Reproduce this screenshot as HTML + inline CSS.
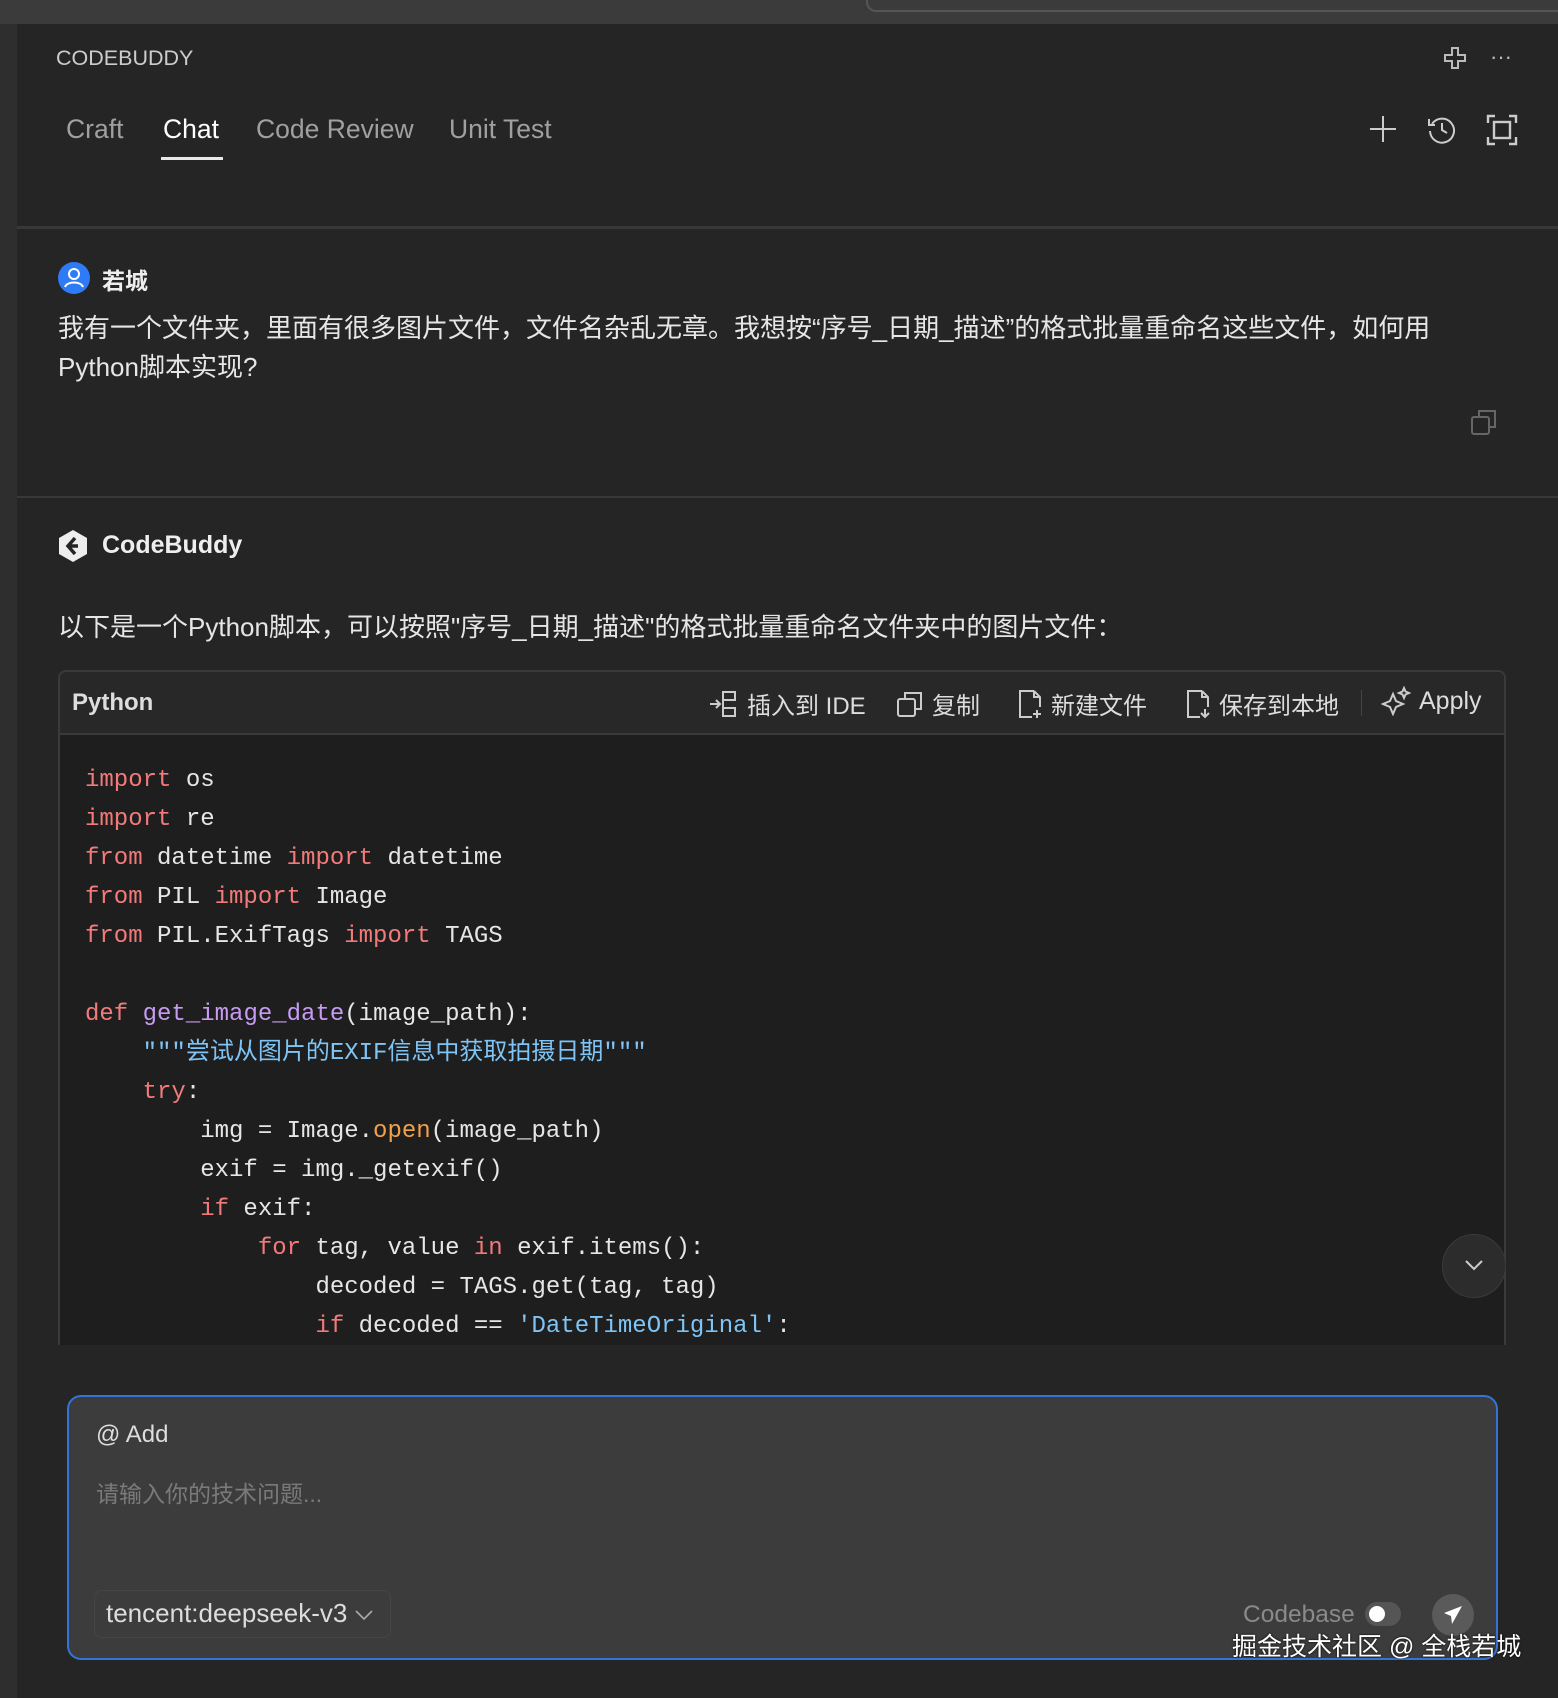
<!DOCTYPE html>
<html><head><meta charset="utf-8"><style>
*{margin:0;padding:0;box-sizing:border-box}
body{width:1558px;height:1698px;background:#252525;position:relative;overflow:hidden;font-family:"Liberation Sans","Noto Sans CJK SC",sans-serif;color:#ddd}
.a{position:absolute;white-space:nowrap}
.code{position:absolute;left:85px;top:761px;font-family:"Liberation Mono","Noto Sans CJK SC",monospace;font-size:24px;line-height:39px;color:#e6e6e6;white-space:pre}
.k{color:#f27a7a}.f{color:#c79bf2}.s{color:#7fc4f5}.o{color:#f0a14a}
.hb{position:absolute;top:686px;font-size:24px;color:#ddd;display:flex;align-items:center;gap:8px}
</style></head><body>
<div class="a" style="left:0;top:0;width:1558px;height:24px;background:#3b3b3b"></div>
<div class="a" style="left:866px;top:-10px;width:700px;height:22px;border:2px solid #555;border-radius:10px;background:#3b3b3b"></div>
<div class="a" style="left:0;top:24px;width:17px;height:1674px;background:#2e2e2e"></div>
<div class="a" style="left:56px;top:46px;font-size:21.5px;color:#ccc">CODEBUDDY</div>
<svg class="a" style="left:1440px;top:44px" width="30" height="30" viewBox="0 0 30 30" fill="none" stroke="#bbb" stroke-width="2"><path d="M12 4h6v7h7v6h-7v7h-6v-7H5v-6h7z"/></svg>
<div class="a" style="left:1490px;top:44px;font-size:22px;color:#bbb">···</div>
<div class="a" style="left:66px;top:114px;font-size:26.5px;color:#a0a0a0">Craft</div>
<div class="a" style="left:163px;top:114px;font-size:26.5px;color:#fff">Chat</div>
<div class="a" style="left:161px;top:157px;width:62px;height:3px;background:#e8e8e8"></div>
<div class="a" style="left:256px;top:114px;font-size:26.5px;color:#a0a0a0">Code Review</div>
<div class="a" style="left:449px;top:114px;font-size:26.5px;color:#a0a0a0">Unit Test</div>
<svg class="a" style="left:1368px;top:114px" width="30" height="30" stroke="#ccc" stroke-width="2"><path d="M15 2v26M2 15h26"/></svg>
<svg class="a" style="left:1426px;top:114px" width="32" height="32" fill="none" stroke="#ccc" stroke-width="2"><path d="M6 10A12 12 0 1 1 4 17"/><path d="M3 5v6h6M16 9v7l5 3"/></svg>
<svg class="a" style="left:1486px;top:114px" width="32" height="32" fill="none" stroke="#ccc" stroke-width="2.4"><path d="M2 9V2h7M23 2h7v7M30 23v7h-7M9 30H2v-7"/><rect x="8" y="8" width="16" height="16"/></svg>
<div class="a" style="left:17px;top:226px;width:1541px;height:3px;background:#383838"></div>
<svg class="a" style="left:58px;top:262px" width="32" height="32"><circle cx="16" cy="16" r="16" fill="#2f7bf5"/><circle cx="16" cy="12" r="5" fill="none" stroke="#fff" stroke-width="2"/><path d="M7 25c2-6 16-6 18 0" fill="none" stroke="#fff" stroke-width="2"/></svg>
<div class="a" style="left:102px;top:262px;font-size:23px;font-weight:bold;color:#eee">若城</div>
<div class="a" style="left:58px;top:309px;font-size:26px;line-height:39px;color:#e6e6e6">我有一个文件夹，里面有很多图片文件，文件名杂乱无章。我想按“序号_日期_描述”的格式批量重命名这些文件，如何用<br>Python脚本实现?</div>
<svg class="a" style="left:1470px;top:408px" width="28" height="28" fill="none" stroke="#666" stroke-width="2"><rect x="2" y="9" width="17" height="17" rx="2"/><path d="M9 9V3h16v16h-6"/></svg>
<div class="a" style="left:17px;top:496px;width:1541px;height:2px;background:#383838"></div>
<svg class="a" style="left:58px;top:530px" width="30" height="32" viewBox="0 0 30 32"><path d="M15 0L29 8v16L15 32 1 24V8z" fill="#eee"/><path d="M17 8l-7 8 7 8M12 16h8" stroke="#252525" stroke-width="3.5" fill="none"/></svg>
<div class="a" style="left:102px;top:531px;font-size:25px;font-weight:bold;color:#eee">CodeBuddy</div>
<div class="a" style="left:58px;top:607px;font-size:26px;color:#e6e6e6">以下是一个Python脚本，可以按照"序号_日期_描述"的格式批量重命名文件夹中的图片文件：</div>
<div class="a" style="left:58px;top:670px;width:1448px;height:680px;border:2px solid #3a3a3a;border-bottom:none;border-radius:8px 8px 0 0;background:#1e1e1e"></div>
<div class="a" style="left:60px;top:672px;width:1444px;height:63px;background:#282828;border-bottom:2px solid #3a3a3a;border-radius:6px 6px 0 0"></div>
<div class="a" style="left:72px;top:689px;font-size:24px;font-weight:bold;color:#ddd">Python</div>
<div class="hb" style="left:709px"><svg width="30" height="28" fill="none" stroke="#ccc" stroke-width="2"><path d="M1 14h10M7 10l4 4-4 4M14 2h12v8H14zM14 18h12v8H14zM14 10v8"/></svg>插入到 IDE</div>
<div class="hb" style="left:896px"><svg width="28" height="28" fill="none" stroke="#ccc" stroke-width="2"><rect x="2" y="9" width="17" height="17" rx="2"/><path d="M9 9V3h16v16h-6"/></svg>复制</div>
<div class="hb" style="left:1017px"><svg width="26" height="30" fill="none" stroke="#ccc" stroke-width="2"><path d="M17 2H3v26h12M17 2l6 6v10M17 2v6h6M20 21v8M16 25h8"/></svg>新建文件</div>
<div class="hb" style="left:1185px"><svg width="26" height="30" fill="none" stroke="#ccc" stroke-width="2"><path d="M17 2H3v26h12M17 2l6 6v10M17 2v6h6M20 20v8M16 24l4 4 4-4"/></svg>保存到本地</div>
<div class="a" style="left:1361px;top:690px;width:1px;height:26px;background:#444"></div>
<div class="hb" style="left:1381px"><svg width="30" height="30" fill="none" stroke="#ccc" stroke-width="2"><path d="M12 8l3 7 7 3-7 3-3 7-3-7-7-3 7-3zM23 2l1.5 3.5L28 7l-3.5 1.5L23 12l-1.5-3.5L18 7l3.5-1.5z"/></svg><span style="font-size:25px">Apply</span></div>
<div class="code"><span class="k">import</span> os
<span class="k">import</span> re
<span class="k">from</span> datetime <span class="k">import</span> datetime
<span class="k">from</span> PIL <span class="k">import</span> Image
<span class="k">from</span> PIL.ExifTags <span class="k">import</span> TAGS

<span class="k">def</span> <span class="f">get_image_date</span>(image_path):
    <span class="s">"""尝试从图片的EXIF信息中获取拍摄日期"""</span>
    <span class="k">try</span>:
        img = Image.<span class="o">open</span>(image_path)
        exif = img._getexif()
        <span class="k">if</span> exif:
            <span class="k">for</span> tag, value <span class="k">in</span> exif.items():
                decoded = TAGS.get(tag, tag)
                <span class="k">if</span> decoded == <span class="s">'DateTimeOriginal'</span>:</div>
<div class="a" style="left:1442px;top:1234px;width:64px;height:64px;border-radius:50%;background:#2c2c2c;border:1px solid #3a3a3a"></div>
<svg class="a" style="left:1464px;top:1258px" width="20" height="14" fill="none" stroke="#ccc" stroke-width="2"><path d="M2 3l8 8 8-8"/></svg>
<div class="a" style="left:17px;top:1345px;width:1541px;height:353px;background:#252525"></div>
<div class="a" style="left:67px;top:1395px;width:1431px;height:265px;border:2px solid #3574d6;border-radius:14px;background:#3c3c3c"></div>
<div class="a" style="left:96px;top:1421px;font-size:24px;color:#ddd">@ Add</div>
<div class="a" style="left:96px;top:1475px;font-size:23px;color:#7a7a7a">请输入你的技术问题...</div>
<div class="a" style="left:94px;top:1590px;width:297px;height:48px;border:1px solid #454545;border-radius:8px"></div>
<div class="a" style="left:106px;top:1598px;font-size:26px;color:#ddd">tencent:deepseek-v3</div>
<svg class="a" style="left:354px;top:1608px" width="20" height="14" fill="none" stroke="#aaa" stroke-width="1.6"><path d="M2 3l8 8 8-8"/></svg>
<div class="a" style="left:1243px;top:1601px;font-size:24.5px;color:#8a8a8a">Codebase</div>
<div class="a" style="left:1365px;top:1602px;width:36px;height:24px;border-radius:12px;background:#555"></div>
<div class="a" style="left:1369px;top:1606px;width:16px;height:16px;border-radius:50%;background:#fff"></div>
<div class="a" style="left:1432px;top:1594px;width:42px;height:42px;border-radius:50%;background:#5a5a5a"></div>
<svg class="a" style="left:1442px;top:1604px" width="22" height="22" fill="#fff"><path d="M20 2L2 9l7 3 1 8z"/></svg>
<div class="a" style="left:1232px;top:1627px;font-size:25px;color:#fff;text-shadow:0 0 2px #000">掘金技术社区 @ 全栈若城</div>
</body></html>
